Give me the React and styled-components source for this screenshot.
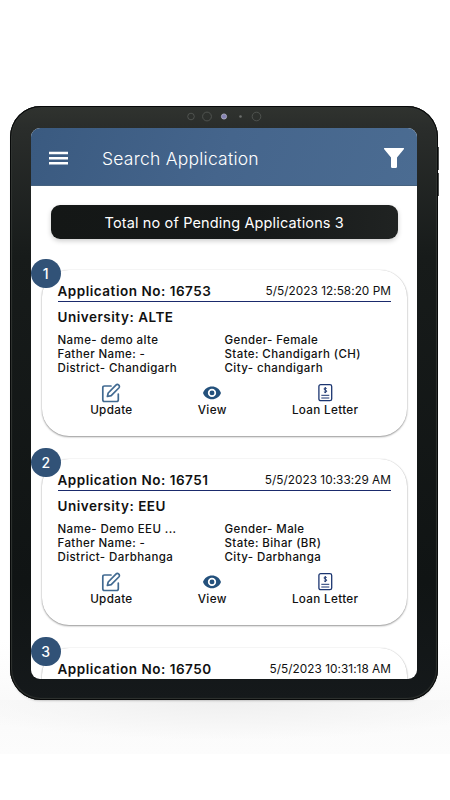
import React from "react";
import styled, { createGlobalStyle } from "styled-components";

const GlobalStyle = createGlobalStyle`
  * { box-sizing: border-box; }
  body { margin: 0; background: #fff; font-family: Inter, Roboto, sans-serif; }
`;

const Page = styled.main`
  width: 450px;
  height: 800px;
  padding: 106px 12px 0 10px;
  overflow: hidden;
  background: radial-gradient(ellipse 290px 40px at 50% 0, #efefef, #f5f5f5 50%, #f5f5f500) 0 700px / 450px 54px no-repeat,
    linear-gradient(#fafafa, #fcfcfc) 0 700px / 450px 54px no-repeat,
    linear-gradient(#fff, #fafafa) 0 640px / 450px 60px no-repeat #fff;
`;

const Tablet = styled.div`
  position: relative;
  width: 428px;
  height: 594px;
  padding: 22px 21px 21px;
  border-radius: 31px;
  background: linear-gradient(180deg, #30332f 0, #2a2d2b 22px, #171b1a 150px, #101414 80%, #15191b 100%);
  box-shadow: inset 0 0 0 1px #070909, inset 0 0 1px 2px #303331, 0 2px 3px -2px #0006;
`;

const SideButton = styled.span`
  position: absolute;
  left: 428px;
  top: ${({ $top }) => $top}px;
  width: 1px;
  height: 23px;
  background: #4a4d4c;
`;

const Cameras = styled.svg`
  position: absolute;
  left: 175px;
  top: 3px;
`;

const Screen = styled.div`
  width: 386px;
  height: 551px;
  border-radius: 9px;
  overflow: hidden;
  background: #fff;
`;

const Toolbar = styled.header`
  display: flex;
  align-items: center;
  height: 58px;
  padding: 3px 13px 0 18px;
  color: #fff;
  background: linear-gradient(110deg, #3a5a80, #45658c 50%, #4b6c92);
  border-bottom: 1px solid #46627f;
`;

const Title = styled.h1`
  flex: 1;
  margin: 0 0 0 33px;
  font-size: 17.5px;
  font-weight: 300;
  letter-spacing: 0.24px;
`;

const Banner = styled.div`
  display: flex;
  align-items: center;
  justify-content: center;
  height: 34px;
  margin: 19px 19px 31px 19.5px;
  padding-top: 1px;
  border-radius: 9px;
  color: #fff;
  background: linear-gradient(90deg, #141716, #161919 60%, #202322);
  box-shadow: 0 2px 5px #0003;
  font-size: 14.5px;
  letter-spacing: 0.14px;
`;

const Card = styled.article`
  position: relative;
  height: 166px;
  margin: 0 10px 23px 11px;
  padding: 11px 16px 0 15.5px;
  border-radius: 27px;
  background: #fff;
  box-shadow: 0 1px 2px #0006, 0 0 1px #0003;
  color: #111;
`;

const Badge = styled.span`
  position: absolute;
  left: -11px;
  top: -11.5px;
  display: flex;
  align-items: center;
  justify-content: center;
  width: 29.5px;
  height: 29.5px;
  border-radius: 50%;
  color: #fff;
  background: #315277;
  font-size: 14px;
  font-weight: 500;
`;

const CardHead = styled.div`
  display: flex;
  justify-content: space-between;
  align-items: flex-start;
  height: 21px;
  border-bottom: 1px solid #1a2a6c;
`;

const Strong = styled.div`
  font-size: 13.5px;
  line-height: 20px;
  font-weight: 600;
  letter-spacing: 0.52px;
`;

const Stamp = styled.time`
  font-size: 11.8px;
  line-height: 21px;
  letter-spacing: 0.04px;
`;

const University = styled(Strong)`
  margin-top: 5px;
`;

const Details = styled.div`
  display: grid;
  grid-template-columns: 167px 1fr;
  grid-auto-rows: 14px;
  margin-top: 6px;
  font-size: 11.5px;
  line-height: 14px;
  font-weight: 500;
  letter-spacing: 0.4px;
  white-space: nowrap;
`;

const Actions = styled.div`
  display: flex;
  justify-content: space-around;
  margin-top: 8px;
`;

const Action = styled.div`
  display: flex;
  flex-direction: column;
  align-items: center;
  font-size: 11.7px;
  line-height: 14px;
  font-weight: 500;
  letter-spacing: 0.32px;
  color: #111;
  svg { display: block; }
`;

const MenuIcon = () => (
  <svg width="20" height="16" viewBox="0 0 20 16" fill="#fff">
    <path d="M0 1.7h19v2.5H0zM0 6.9h19v2.5H0zM0 12.1h19v2.5H0z" />
  </svg>
);

const FilterIcon = () => (
  <svg width="20" height="22" viewBox="0 0 20 22">
    <path d="M.7 1h18.6c.8 0 .9.7.5 1.2L13 10.6v9.2c0 .7-.4 1.2-1 1.2H8c-.6 0-1-.5-1-1.2v-9.2L.2 2.2C-.2 1.7-.1 1 .7 1z" fill="#fff" />
  </svg>
);

const UpdateIcon = () => (
  <svg width="20" height="20" viewBox="0 0 20 20" fill="none" stroke="#416a91" strokeWidth="1.7" strokeLinejoin="round" strokeLinecap="round">
    <path d="M10 3H3.5Q1.8 3 1.8 4.7v12.1q0 1.7 1.7 1.7h12.1q1.7 0 1.7-1.7V11" />
    <path d="m7.2 10 7.7-7.8c1.9-1.9 4.8.8 2.9 2.8L10.2 12.6l-3.8.9z" />
  </svg>
);

const ViewIcon = () => (
  <svg width="20" height="20" viewBox="0 0 20 20">
    <path d="M10 3.6C5.8 3.6 2.6 6 1 9.9c1.6 3.9 4.8 6.3 9 6.3s7.4-2.4 9-6.3c-1.6-3.9-4.8-6.3-9-6.3z" fill="#24517c" />
    <circle cx="10" cy="9.9" r="3.3" fill="#24517c" stroke="#fff" strokeWidth="1.7" />
  </svg>
);

const LoanIcon = () => (
  <svg width="20" height="20" viewBox="0 0 20 20" fill="none" stroke="#1b3570">
    <rect x="3.9" y="1.7" width="12.8" height="16" rx="1.8" strokeWidth="1.3" />
    <path d="M6.3 12.3h8M6.3 15h8" strokeWidth="1" />
    <path d="M11.7 5.6C11.2 4.8 9 4.7 9 6s2.7.8 2.7 2.2S9.4 9.6 8.9 8.7M10.3 4.1v6" strokeWidth="1" />
  </svg>
);

const applications = [
  {
    number: "16753", stamp: "5/5/2023 12:58:20 PM", university: "ALTE", name: "demo alte",
    gender: "Female", state: "Chandigarh (CH)", district: "Chandigarh", city: "chandigarh",
  },
  {
    number: "16751", stamp: "5/5/2023 10:33:29 AM", university: "EEU", name: "Demo EEU ...",
    gender: "Male", state: "Bihar (BR)", district: "Darbhanga", city: "Darbhanga",
  },
  { number: "16750", stamp: "5/5/2023 10:31:18 AM" },
];

const ApplicationCard = ({ index, item }) => (
  <Card>
    <Badge>{index}</Badge>
    <CardHead>
      <Strong>Application No: {item.number}</Strong>
      <Stamp>{item.stamp}</Stamp>
    </CardHead>
    {item.university && (
      <>
        <University>University: {item.university}</University>
        <Details>
          <span>Name- {item.name}</span>
          <span>Gender- {item.gender}</span>
          <span>Father Name: -</span>
          <span>State: {item.state}</span>
          <span>District- {item.district}</span>
          <span>City- {item.city}</span>
        </Details>
        <Actions>
          <Action><UpdateIcon />Update</Action>
          <Action><ViewIcon />View</Action>
          <Action><LoanIcon />Loan Letter</Action>
        </Actions>
      </>
    )}
  </Card>
);

export default function App() {
  return (
    <>
      <GlobalStyle />
      <Page>
        <Tablet>
          <Cameras width="80" height="16" viewBox="0 0 80 16" fill="none" stroke="#575a57" strokeWidth=".8">
            <circle cx="6" cy="7.5" r="3.3" />
            <circle cx="22" cy="7.5" r="4.4" />
            <circle cx="39" cy="7.5" r="2.6" fill="#8582b4" stroke="#b5b5c4" />
            <circle cx="55.5" cy="7.5" r="1.3" fill="#6c6e6c" stroke="none" />
            <circle cx="71.5" cy="7.5" r="4.3" />
          </Cameras>
          <SideButton $top={41} />
          <SideButton $top={67} />
          <Screen>
            <Toolbar>
              <MenuIcon />
              <Title>Search Application</Title>
              <FilterIcon />
            </Toolbar>
            <Banner>Total no of Pending Applications 3</Banner>
            {applications.map((item, i) => (
              <ApplicationCard key={item.number} index={i + 1} item={item} />
            ))}
          </Screen>
        </Tablet>
      </Page>
    </>
  );
}
